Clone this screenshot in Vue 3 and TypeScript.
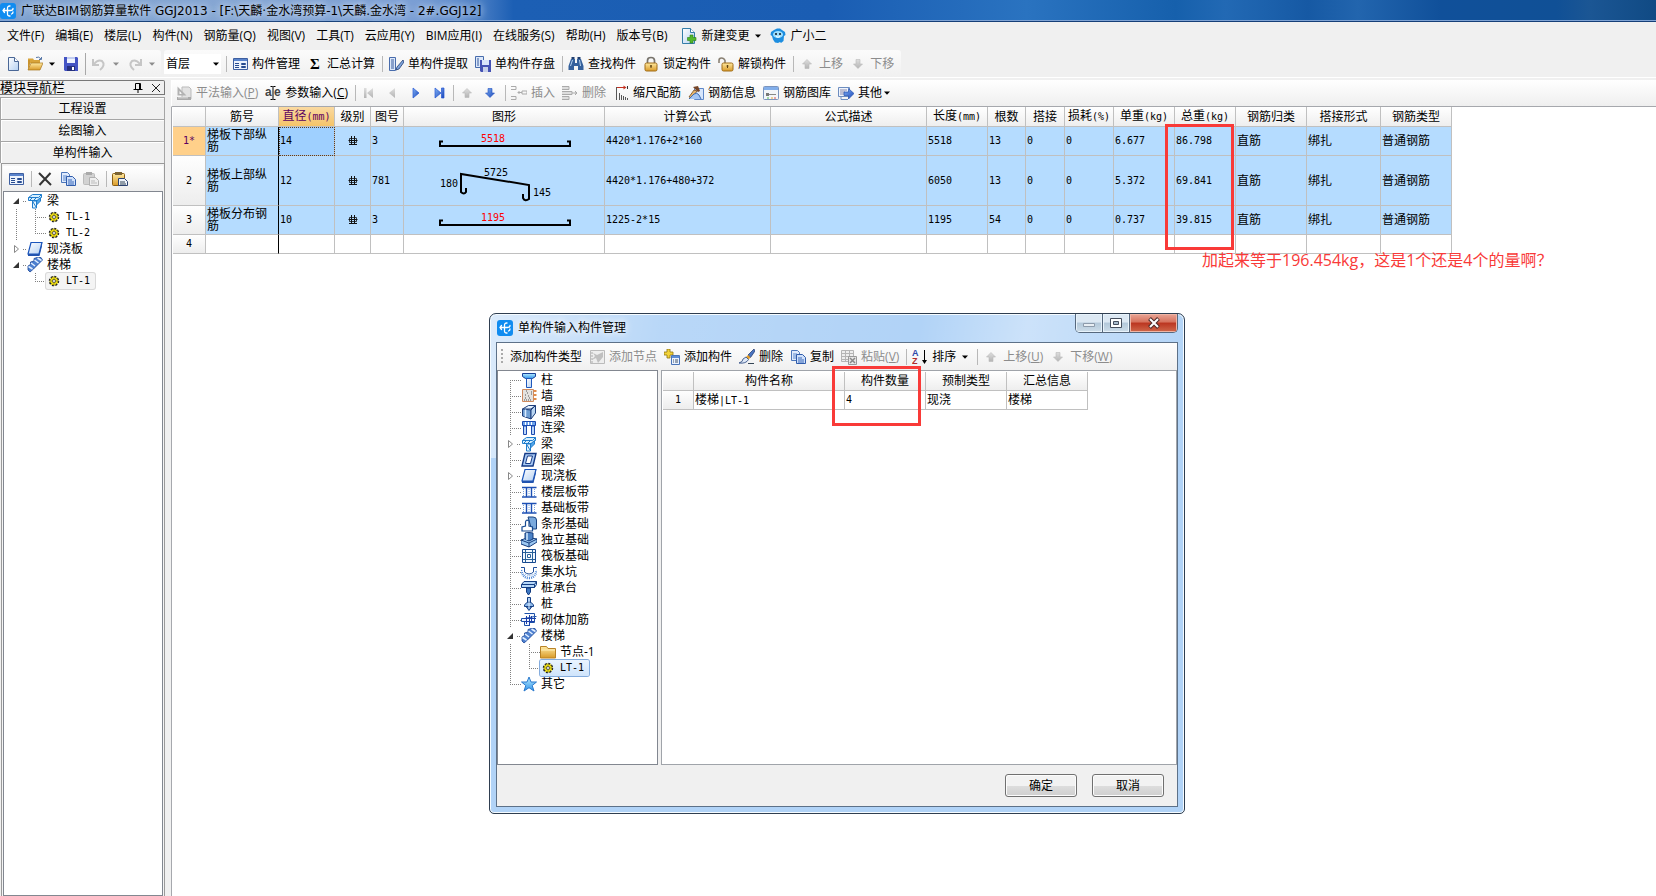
<script setup lang="ts">
interface Tool {
  icon?: string
  label?: string
  hotkey?: string
  name?: string
  disabled?: boolean
  drop?: boolean
  sep?: boolean
}
interface Node {
  label: string
  icon: string
  guides: string[]
  fold?: 'open' | 'closed'
  latin?: boolean
  selected?: boolean
}
interface Bar {
  no: string
  name: string
  dia: string
  shapeNo: string
  formula: string
  length: string
  count: string
  unit: string
  total: string
}

const menus: string[] = ['文件(F)', '编辑(E)', '楼层(L)', '构件(N)', '钢筋量(Q)', '视图(V)', '工具(T)', '云应用(Y)', 'BIM应用(I)', '在线服务(S)', '帮助(H)', '版本号(B)']

const mainTools: Tool[] = [
  { sep: true },
  { icon: 'card', label: '构件管理' },
  { icon: 'sigma', label: '汇总计算' },
  { sep: true },
  { icon: 'extract', label: '单构件提取' },
  { icon: 'store', label: '单构件存盘' },
  { sep: true },
  { icon: 'binoc', label: '查找构件' },
  { icon: 'lock', label: '锁定构件' },
  { icon: 'unlock', label: '解锁构件' },
  { sep: true },
  { icon: 'up', label: '上移', disabled: true },
  { icon: 'down', label: '下移', disabled: true },
]

const gridTools: Tool[] = [
  { icon: 'square', label: '平法输入', hotkey: 'P', disabled: true },
  { icon: 'ae', label: '参数输入', hotkey: 'C' },
  { sep: true },
  { icon: 'first', name: '首行', disabled: true },
  { icon: 'prev', name: '上一行', disabled: true },
  { icon: 'next', name: '下一行' },
  { icon: 'last', name: '末行' },
  { sep: true },
  { icon: 'up', name: '行上移', disabled: true },
  { icon: 'down-blue', name: '行下移' },
  { sep: true },
  { icon: 'insert', label: '插入', disabled: true },
  { icon: 'remove', label: '删除', disabled: true },
  { icon: 'scale', label: '缩尺配筋' },
  { icon: 'info', label: '钢筋信息' },
  { icon: 'library', label: '钢筋图库' },
  { icon: 'more', label: '其他', drop: true },
]

const navTools: Tool[] = [
  { icon: 'card', name: '构件管理' },
  { sep: true },
  { icon: 'cross', name: '删除构件' },
  { icon: 'copy', name: '复制构件' },
  { icon: 'paste-grey', name: '粘贴构件', disabled: true },
  { sep: true },
  { icon: 'paste', name: '粘贴' },
]

const dialogTools: Tool[] = [
  { label: '添加构件类型' },
  { icon: 'add-node', label: '添加节点', disabled: true },
  { icon: 'add-item', label: '添加构件' },
  { icon: 'brush', label: '删除' },
  { icon: 'copy', label: '复制' },
  { icon: 'paste-grid', label: '粘贴', hotkey: 'V', disabled: true },
  { sep: true },
  { icon: 'sort', label: '排序', drop: true },
  { sep: true },
  { icon: 'up', label: '上移', hotkey: 'U', disabled: true },
  { icon: 'down', label: '下移', hotkey: 'W', disabled: true },
]

const navTree: Node[] = [
  { label: '梁', icon: 'beam', guides: ['stub'], fold: 'open' },
  { label: 'TL-1', icon: 'gear', guides: ['bar', 'tee'], latin: true },
  { label: 'TL-2', icon: 'gear', guides: ['bar', 'elbow'], latin: true },
  { label: '现浇板', icon: 'slab', guides: ['stub'], fold: 'closed' },
  { label: '楼梯', icon: 'stair', guides: ['stub'], fold: 'open' },
  { label: 'LT-1', icon: 'gear', guides: ['blank', 'elbow'], latin: true, selected: true },
]

const dialogTree: Node[] = [
  { label: '柱', icon: 'column', guides: ['start'] },
  { label: '墙', icon: 'wall', guides: ['tee'] },
  { label: '暗梁', icon: 'hidden-beam', guides: ['tee'] },
  { label: '连梁', icon: 'link-beam', guides: ['tee'] },
  { label: '梁', icon: 'beam', guides: ['stub'], fold: 'closed' },
  { label: '圈梁', icon: 'ring', guides: ['tee'] },
  { label: '现浇板', icon: 'slab', guides: ['stub'], fold: 'closed' },
  { label: '楼层板带', icon: 'band', guides: ['tee'] },
  { label: '基础板带', icon: 'band', guides: ['tee'] },
  { label: '条形基础', icon: 'strip', guides: ['tee'] },
  { label: '独立基础', icon: 'footing', guides: ['tee'] },
  { label: '筏板基础', icon: 'raft', guides: ['tee'] },
  { label: '集水坑', icon: 'pit', guides: ['tee'] },
  { label: '桩承台', icon: 'cap', guides: ['tee'] },
  { label: '桩', icon: 'pile', guides: ['tee'] },
  { label: '砌体加筋', icon: 'masonry', guides: ['tee'] },
  { label: '楼梯', icon: 'stair', guides: ['stub'], fold: 'open' },
  { label: '节点-1', icon: 'folder', guides: ['bar', 'tee'] },
  { label: 'LT-1', icon: 'gear', guides: ['bar', 'elbow'], latin: true, selected: true },
  { label: '其它', icon: 'star', guides: ['elbow'] },
]

const columns: { title: string; unit?: string; width: number }[] = [
  { title: '', width: 33 },
  { title: '筋号', width: 73 },
  { title: '直径', unit: '(mm)', width: 56 },
  { title: '级别', width: 36 },
  { title: '图号', width: 33 },
  { title: '图形', width: 201 },
  { title: '计算公式', width: 166 },
  { title: '公式描述', width: 156 },
  { title: '长度', unit: '(mm)', width: 61 },
  { title: '根数', width: 38 },
  { title: '搭接', width: 39 },
  { title: '损耗', unit: '(%)', width: 49 },
  { title: '单重', unit: '(kg)', width: 61 },
  { title: '总重', unit: '(kg)', width: 61 },
  { title: '钢筋归类', width: 71 },
  { title: '搭接形式', width: 74 },
  { title: '钢筋类型', width: 71 },
]

const bars: Bar[] = [
  { no: '1*', name: '梯板下部纵筋', dia: '14', shapeNo: '3', formula: '4420*1.176+2*160', length: '5518', count: '13', unit: '6.677', total: '86.798' },
  { no: '2', name: '梯板上部纵筋', dia: '12', shapeNo: '781', formula: '4420*1.176+480+372', length: '6050', count: '13', unit: '5.372', total: '69.841' },
  { no: '3', name: '梯板分布钢筋', dia: '10', shapeNo: '3', formula: '1225-2*15', length: '1195', count: '54', unit: '0.737', total: '39.815' },
]
</script>

<template>
  <svg class="lettered" aria-hidden="true">
    <symbol id="sigma" viewBox="0 0 16 16"><text x="3" y="13" font-family="Liberation Serif" font-weight="bold" font-size="15">Σ</text></symbol>
    <symbol id="ae" viewBox="0 0 16 16"><text x="0" y="11" font-family="Liberation Sans" font-weight="bold" font-size="12" fill="#444">a</text><text x="9" y="11" font-family="Liberation Sans" font-weight="bold" font-size="12" fill="#444">e</text><path d="M5.500 1.500h2l.5.5.5-.5h2M8 2v12m-2.500.5h2L8 14l.5.5h2" fill="none" stroke="#000" /></symbol>
    <symbol id="sort" viewBox="0 0 16 16"><text x="0" y="7" font-family="Liberation Sans" font-weight="bold" font-size="9" fill="#2c48a8">A</text><text x="0" y="15" font-family="Liberation Sans" font-weight="bold" font-size="9" fill="#b02c2c">Z</text><path d="M12.500 1v12" stroke="#000" /><path d="M10 11h5l-2.500 4z" /></symbol>
  </svg>
  <svg class="defs" aria-hidden="true">
    <defs>
      <linearGradient id="blue" x1="0" y1="0" x2="1" y2="1"><stop offset="0" stop-color="#7fb0f5" /><stop offset="1" stop-color="#1c48b8" /></linearGradient>
      <linearGradient id="pale" x1="0" y1="0" x2="1" y2="1"><stop offset="0" stop-color="#fff" /><stop offset="1" stop-color="#b4d0f2" /></linearGradient>
      <linearGradient id="gold" x1="0" y1="0" x2="0" y2="1"><stop offset="0" stop-color="#ffe9a0" /><stop offset="1" stop-color="#d99a28" /></linearGradient>
      <linearGradient id="grey" x1="0" y1="0" x2="0" y2="1"><stop offset="0" stop-color="#dedede" /><stop offset="1" stop-color="#b4b4b4" /></linearGradient>
      <linearGradient id="sky" x1="0" y1="0" x2="0" y2="1"><stop offset="0" stop-color="#b8ecff" /><stop offset="1" stop-color="#3294ea" /></linearGradient>
    </defs>
    <symbol id="logo" viewBox="0 0 16 16"><rect width="16" height="16" rx="3" fill="#108cf0" /><g fill="none" stroke="#fff" stroke-width="1.300" stroke-linecap="round"><path d="M10 3Q7.500 2.800 7.500 5v6q0 2.200 2.500 2M3 7.500h7.500Q13 7.500 13 5.500M4.500 5.500 3 7.500l1.500 2M11.500 11q1.500-.5 1.500-2" /></g></symbol>
    <symbol id="new" viewBox="0 0 16 16"><path d="M3.500 1.500h6l4 4v9h-10z" fill="url(#pale)" stroke="#4a6796" /><path d="M9.500 1.500v4h4" fill="#fff" stroke="#4a6796" /></symbol>
    <symbol id="open" viewBox="0 0 16 16"><path d="M1 4V2.500h5L7 4h6v3H1z" fill="#d8a43a" /><path d="M1 14V4h2v4z" fill="#c9922c" /><path d="M1 14 4 7h12l-3 7z" fill="url(#gold)" stroke="#a8761c" stroke-width=".7" /><path d="M9 1.500q3-1.500 5 1.500m.5-2v2.500H12" fill="none" stroke="#5878a8" /></symbol>
    <symbol id="save" viewBox="0 0 16 16"><path d="M1 1h13l1 1v13H2l-1-1z" fill="#4454c4" /><path d="M4 1h8v6H4z" fill="#eef3ff" /><path d="M4 1h8v2H4z" fill="#c2cdf0" /><path d="M4 10h8v5H4z" fill="#26307e" /><path d="M9 11h2v3H9z" fill="#fff" /></symbol>
    <symbol id="undo" viewBox="0 0 16 16"><path d="M2 3v6h6" fill="none" stroke="#c6c6c6" stroke-width="2" /><path d="M3 8q4-5 8-3 4 4-2 9" fill="none" stroke="#c6c6c6" stroke-width="2" /></symbol>
    <symbol id="redo" viewBox="0 0 16 16"><path d="M14 3v6H8" fill="none" stroke="#c6c6c6" stroke-width="2" /><path d="M13 8Q9 3 5 5q-4 4 2 9" fill="none" stroke="#c6c6c6" stroke-width="2" /></symbol>
    <symbol id="card" viewBox="0 0 16 16"><path d="M1.500 2.500h14v11h-14z" fill="#edf3fc" stroke="#3e5fa0" /><path d="M2 3h13v2H2z" fill="#5a84cc" /><path d="M3 7.500h4M3 9.500h4M3 11.500h4" stroke="#284c90" /><path d="M9.500 7.500h4v1h-4zm0 3h4v1h-4z" fill="#fff" stroke="#284c90" /></symbol>
    <symbol id="extract" viewBox="0 0 16 16"><path d="M1.500 1.500h6v13h-6z" fill="#dce8fa" stroke="#486cac" /><path d="M3 4h3M3 6h3M3 8h3M3 10h3M3 12h3" stroke="#34589c" /><path d="M15 4 9 11l-1 3 3-1 5-7z" fill="#7fa5dc" stroke="#213c72" stroke-width=".8" /></symbol>
    <symbol id="store" viewBox="0 0 16 16"><path d="M.5.5h8v11h-8z" fill="#dce8fa" stroke="#486cac" /><path d="M2 3h2M2 5h2M2 7h2M2 9h2" stroke="#34589c" /><path d="M5 4h11v12H6l-1-1z" fill="#4552b4" /><path d="M7 4h7v5H7z" fill="#d9e4fa" /><path d="M8 11h5v5H8z" fill="#c8d0ea" /></symbol>
    <symbol id="binoc" viewBox="0 0 16 16"><path d="M3 3h4v4h2V3h4l2.500 7v4H10v-4H6v4H.5v-4z" fill="#34609c" /><path d="M3.500 1h3v2h-3zm6 0h3v2h-3z" fill="#203e70" /><path d="M4 4h1L3 10H2zm7 0h1l1 6h-1z" fill="#b6d2f0" /></symbol>
    <symbol id="lock" viewBox="0 0 16 16"><path d="M4.500 8V4.500Q4.500 1.500 8 1.500t3.500 3V8" fill="none" stroke="#77736c" stroke-width="1.700" /><rect x="2" y="7" width="12" height="8" rx="1.500" fill="url(#gold)" stroke="#a06c18" /><path d="M8 9v3M7 10h2" stroke="#5c4010" /></symbol>
    <symbol id="unlock" viewBox="0 0 16 16"><path d="M1 7V4.500Q1 2 3.500 2T7 4.500V8" fill="none" stroke="#8a8174" stroke-width="1.600" /><rect x="4" y="7" width="11" height="8" rx="1.500" fill="url(#gold)" stroke="#a06c18" /><path d="M9.500 9v3m-1-2h2" stroke="#5c4010" /></symbol>
    <symbol id="up" viewBox="0 0 16 16"><path d="m8 3.500 4.500 4.500H10v4.500H6V8H3.500z" fill="url(#grey)" stroke="#bababa" stroke-width=".6" /></symbol>
    <symbol id="down" viewBox="0 0 16 16"><path d="m8 12.500 4.500-4.500H10V3.500H6V8H3.500z" fill="url(#grey)" stroke="#bababa" stroke-width=".6" /></symbol>
    <symbol id="down-blue" viewBox="0 0 16 16"><path d="m8 12.500 4.500-4.500H10V3.500H6V8H3.500z" fill="url(#blue)" stroke="#2450c0" stroke-width=".6" /></symbol>
    <symbol id="square" viewBox="0 0 16 16"><path d="M6 2h7l2 2v10H6z" fill="#e2e2e2" stroke="#bbb" /><path d="M1.500 1.500v9h9zM3.500 6v3h3z" fill="#b2b2b2" fill-rule="evenodd" /><path d="M1 12h14v3H1z" fill="#aaa" /><path d="M3 12v1.500m2-1.500v1.500m2-1.500v1.500m2-1.500v1.500m2-1.500v1.500" stroke="#eee" /></symbol>
    <symbol id="first" viewBox="0 0 16 16"><path d="M3 3h2.500v10H3zm9 0v10L6 8z" fill="url(#grey)" /></symbol>
    <symbol id="prev" viewBox="0 0 16 16"><path d="M11 3v10L5 8z" fill="url(#grey)" /></symbol>
    <symbol id="next" viewBox="0 0 16 16"><path d="M6 3v10l6-5z" fill="url(#blue)" stroke="#2558d4" stroke-width=".7" /></symbol>
    <symbol id="last" viewBox="0 0 16 16"><path d="M11.500 3H14v10h-2.500zM5 3v10l6-5z" fill="url(#blue)" stroke="#2558d4" stroke-width=".7" /></symbol>
    <symbol id="insert" viewBox="0 0 16 16"><path d="M0 1.500h5m0 0v3H0m0 7h5v3H0m7-7h4m0-1.500h5v3h-5zM8.500 6 7 7.500 8.500 9" fill="none" stroke="#aaa" /></symbol>
    <symbol id="remove" viewBox="0 0 16 16"><path d="M0 1.500h7v3H0m0 7h7v3H0M0 6.500h10v3H0M10 8h5m-2-2 2 2-2 2" fill="#ddd" stroke="#aaa" /></symbol>
    <symbol id="scale" viewBox="0 0 16 16"><path d="M3.500 2v13M6.500 8v7m2-5v5m2-4v4m2-3v3m2-2v2" fill="none" stroke="#444" stroke-width=".9" /><path d="M4 2.500h8" stroke="#c43020" /><path d="M10.500.5v4l3-2z" fill="#c43020" /><path d="M14.500 1v3" stroke="#333" /></symbol>
    <symbol id="info" viewBox="0 0 16 16"><path d="M6.500 3.500h9v11h-9z" fill="#d7e6fc" stroke="#5f88c8" /><path d="m1 12 5-7 3 1-5 7z" fill="#e6b56c" stroke="#754b20" stroke-width=".8" /><path d="M1 14 6 9q3-2 5 1l2 4" fill="#a4c6f4" stroke="#3e6cb0" /><path d="m5 2 5-1 2 5-2 1-3-3z" fill="#774628" /></symbol>
    <symbol id="library" viewBox="0 0 16 16"><rect x=".5" y="1.500" width="15" height="13" rx="1" fill="#f3f5f9" stroke="#7b94bd" /><path d="M1 2h14v3H1z" fill="#82aeea" /><path d="M3 9.500h10" stroke="#888" /><path d="M3 8h3v3H3z" fill="#777" /><path d="M4 13h2" stroke="#4ab94a" /><path d="M8 13h2" stroke="#e4aa33" /><path d="M11 13h2" stroke="#d85050" /></symbol>
    <symbol id="more" viewBox="0 0 16 16"><path d="M.5 2.500h11v9H.5z" fill="#eef4fd" stroke="#6d8dbf" /><path d="M2 5h7M2 7h5M2 9h5" stroke="#88a" /><path d="M3 11.500v3h7" fill="none" stroke="#6d8dbf" /><path d="M6 7h4.500V3.500L16 8.500 10.500 14v-3.500H6z" fill="url(#blue)" stroke="#234fac" stroke-width=".7" /></symbol>
    <symbol id="cross" viewBox="0 0 16 16"><path d="m2 2 12 12M13.500 2 2.500 14" stroke="#333" stroke-width="2" /></symbol>
    <symbol id="copy" viewBox="0 0 16 16"><path d="M1.500 1.500h6l2 2v8h-8z" fill="#dfeafc" stroke="#4c76ba" /><path d="M3 5h4M3 7h4M3 9h4" stroke="#5d88cc" /><path d="M6.500 5.500h6l3 3v6h-9z" fill="#cfe0fa" stroke="#305cab" /><path d="M8 9h4m-4 2h6m-6 2h6" stroke="#3a68b8" /></symbol>
    <symbol id="paste-grey" viewBox="0 0 16 16"><rect x=".5" y="2.500" width="11" height="11" rx="1" fill="#d2d2d2" stroke="#bbb" /><path d="M3 1h6v3H3z" fill="#aaa" /><path d="M6.500 6.500h6l3 3v5h-9z" fill="#eee" stroke="#b0b0b0" /><path d="M8 10h4m-4 2h6" stroke="#bbb" /></symbol>
    <symbol id="paste" viewBox="0 0 16 16"><rect x=".5" y="2.500" width="12" height="12" rx="1" fill="url(#gold)" stroke="#8a5e14" /><path d="M3 1h7v3H3z" fill="#7c6434" /><path d="M6.500 7.500h6l3 3v4h-9z" fill="#eef3fb" stroke="#2c4270" /><path d="M8 11h5m-5 2h6" stroke="#345" /></symbol>
    <symbol id="add-node" viewBox="0 0 16 16"><path d="M1.500 1.500h14v13h-14z" fill="#eee" stroke="#bbb" /><path d="m4 4 4 2 6-3v5l-5 6-2-5-4 2 3-4z" fill="#c0c0c0" /><path d="M2 4h2M2 7h2M2 10h2M2 13h2" stroke="#aaa" /></symbol>
    <symbol id="add-item" viewBox="0 0 16 16"><path d="M3 0h3v3h3v3H6v3H3V6H0V3h3z" fill="#f3d33a" stroke="#8d7410" stroke-width=".8" /><path d="M7.500 6.500h8v9h-8z" fill="#eaf2ff" stroke="#4a74b8" /><path d="M8 7h7v2H8z" fill="#5b8cd8" /><path d="M9 11h1m1 0h3m-5 2h1m1 0h3" stroke="#456" /></symbol>
    <symbol id="brush" viewBox="0 0 16 16"><path d="m15 0-6 6 2.500 2.500L16 2z" fill="#4a75c0" stroke="#1c356c" stroke-width=".7" /><path d="m9 6 2.500 2.500-2 2L7 8z" fill="#e5a02c" /><path d="M7 8 9.500 10.500Q7 15 0 14q4-1 4-4z" fill="#dfe9f7" stroke="#24437c" stroke-width=".8" /><path d="M9 14.500h6" stroke="#345" /></symbol>
    <symbol id="paste-grid" viewBox="0 0 16 16"><path d="M.5 1.500h12v11H.5zM.500 4.500h12m-12 3h12m-12 3h12M4.500 2v10m4-10v10" fill="#eee" stroke="#b5b5b5" /><path d="M7.500 7.500h8v8h-8z" fill="#e6e6e6" stroke="#999" /><path d="m9 9 5 5m0-5-5 5" stroke="#888" stroke-width="1.500" /></symbol>
    <symbol id="new-change" viewBox="0 0 16 16"><path d="M1.500.5h8l4 4v11h-12z" fill="url(#pale)" stroke="#347da8" /><path d="M9.500.5v4h4" fill="#fff" stroke="#347da8" /><path d="M9 7h3v2.500h3v3h-3V15H9v-2.500H6.500v-3H9z" fill="#52b82a" stroke="#2c8215" stroke-width=".6" /></symbol>
    <symbol id="mascot" viewBox="0 0 16 16"><path d="M4 2 7 .5h3L12 2l3 2 .5 3-1.500 1-.5 5-2.500 2-1-1-2 1-3-.5-2-3L2 8 .5 7 1 4z" fill="#1d8ee0" /><ellipse cx="8" cy="6.500" rx="5" ry="3.600" fill="#9fe0ff" /><circle cx="6" cy="6" r="1.100" fill="#123" /><circle cx="10" cy="6" r="1.100" fill="#123" /><path d="M6 8.500q2 1.500 4 0" fill="none" stroke="#fff" /></symbol>
    <symbol id="beam" viewBox="0 0 16 16"><path d="m1.500 4.500 4-3h9v3l-3 3h-10z" fill="#d5efff" stroke="#1f7ccc" /><path d="M1.500 4.500h10l3-3" fill="none" stroke="#1f7ccc" /><path d="M5.500 8h4v7h-4z" fill="#e4f5ff" stroke="#1f7ccc" /><path d="m9.500 8 4-3.500V8l-4 4z" fill="#4fa4e8" stroke="#1f7ccc" /><path d="m3 7 2-2m2 2 2-2M6 9l3 5" stroke="#1f7ccc" /></symbol>
    <symbol id="slab" viewBox="0 0 16 16"><path d="M4 1.500h11L12 13H1z" fill="url(#pale)" stroke="#1a55bc" stroke-width="1.200" /><path d="M1 13h11l3-11.500V5l-2.500 10H1z" fill="#2254b0" /></symbol>
    <symbol id="stair" viewBox="0 0 16 16"><path d="m1 9 2.500-1.500V5L7 4V1.500l3-1h4l1.500 2.500-9 9L3 15l-2-2z" fill="#4d80d0" stroke="#1c4698" stroke-width=".8" /><path d="m1.500 9.500 4 2.500M4 6l4 3M7.500 3l4 3M10.500 1l4 2.500" stroke="#e2efff" stroke-width="1.500" /></symbol>
    <symbol id="gear" viewBox="0 0 16 16"><circle cx="8" cy="8" r="4.500" fill="#ffec00" stroke="#222" stroke-width="1.400" stroke-dasharray="2 1.500" /><circle cx="8" cy="8" r="1.500" fill="#fff" stroke="#333" stroke-width=".8" /><path d="M8 3v3m0 4v3M3 8h3m4 0h3M4.500 4.500l2 2m3 3 2 2m0-7-2 2m-3 3-2 2" stroke="#555" stroke-width=".6" /></symbol>
    <symbol id="column" viewBox="0 0 16 16"><path d="M1.500 1.500h13v3l-3 2h-7l-3-2z" fill="url(#sky)" stroke="#173f96" /><path d="M5.500 6.500h5v9h-5z" fill="url(#pale)" stroke="#1e58bc" /></symbol>
    <symbol id="wall" viewBox="0 0 16 16"><path d="M1.500 1.500h11v12h-11z" fill="#e4e2df" stroke="#cf8a5e" /><path d="M3 12h1m1 0h1m1 0h1m1 0h1M4 10h1m2-2h1m2-2h1M6 5h1m-3 2h1m3 3h1m1-6h1M5 3h1" stroke="#555" /><path d="M13 3h2.500M13 7h2.500M13 11h2.500" stroke="#d96a10" stroke-width="1.600" /></symbol>
    <symbol id="hidden-beam" viewBox="0 0 16 16"><path d="m1.500 5 6-3.500h7L10 5z" fill="#e3f0fd" stroke="#1e3f7c" /><path d="m1.500 5 8.500 1v9l-8.500-3z" fill="#6f9fd4" stroke="#1e3f7c" /><path d="m10 6 4.500-4.500V9L10 15z" fill="#bad6f2" stroke="#1e3f7c" /><path d="M4.500 5.500V13" stroke="#dcecff" stroke-width="1.500" /></symbol>
    <symbol id="link-beam" viewBox="0 0 16 16"><path d="M1.500 1.500h13v4h-13z" fill="#6fa4ec" stroke="#1a4ab0" /><path d="M4.500 2v3m3-3v3m3-3v3" stroke="#fff" /><path d="M2.500 6h3v8.500h-3zm8 0h3v8.500h-3z" fill="#b9d5fa" stroke="#1a4ab0" /></symbol>
    <symbol id="ring" viewBox="0 0 16 16"><path d="M4 1.500h11L12 14H1z" fill="#a9caf4" stroke="#153a86" stroke-width="1.400" /><path d="M6.500 4h5L9.500 11.500H4.500z" fill="#fff" stroke="#153a86" /></symbol>
    <symbol id="band" viewBox="0 0 16 16"><path d="M1 3.500h14.500M1 13h14.500" stroke="#1c4fb4" stroke-width="1.600" /><path d="M5.500 4v9m5-9v9" stroke="#1c4fb4" stroke-width="1.400" /><path d="M2.500 5v7M13.500 5v7M8 5v7" stroke="#7ba3dc" stroke-dasharray="1 1" /></symbol>
    <symbol id="strip" viewBox="0 0 16 16"><path d="M7 1h5q3.500 0 3.500 3v9h-5z" fill="#7aa9dc" stroke="#1b4480" /><path d="M1 15v-4l3.500-1V6q.5-3 3.500-1v5l3.500 1v4z" fill="#fff" stroke="#184a90" stroke-width="1.200" /></symbol>
    <symbol id="footing" viewBox="0 0 16 16"><path d="m0 8 6-2h4l6 1v3l-8 5-8-3z" fill="#9cc8f2" stroke="#153c7c" /><path d="m0 8 8 3 8-4M8 11v4" fill="none" stroke="#153c7c" /><path d="m4 1 4-.5 4 .5v6L8 9 4 7z" fill="#4b82c6" stroke="#153c7c" /><path d="M6 1v7" stroke="#d5ebff" stroke-width="1.500" /></symbol>
    <symbol id="raft" viewBox="0 0 16 16"><path d="M1.500 1.500h13v13h-13z" fill="#f2f8ff" stroke="#184a90" /><path d="M4.500 2v12M11.500 2v12M2 4.500h12M2 11.500h12" stroke="#286098" /><path d="M6.500 6.500h3v3h-3z" fill="#fff" stroke="#286098" /></symbol>
    <symbol id="pit" viewBox="0 0 16 16"><path d="M0 3.500h3.500V8q4.500 4 9 0V3.500H16" fill="none" stroke="#1f4f9c" /><path d="M0 6q2 8 8 8t8-8" fill="none" stroke="#4f89d8" stroke-width="2.500" stroke-dasharray="1 1" /><path d="M4 10q4 3 8 0" fill="none" stroke="#6a9edf" stroke-dasharray="1 1" /></symbol>
    <symbol id="cap" viewBox="0 0 16 16"><path d="M.5 4.500 3 1.500h12.500v3l-2 3H.5z" fill="#b4d6f8" stroke="#123c82" /><path d="M.5 4.500h13v3M13.500 4.500l2-3" fill="none" stroke="#123c82" /><path d="M5.500 8h4v4l-2 3-2-3z" fill="#3d77c2" stroke="#123c82" /></symbol>
    <symbol id="pile" viewBox="0 0 16 16"><path d="M6.500 1.500h3v5h-3zM3.500 9q2.500-3 3-3h3q.5 0 3 3v1.500h-9zM5.500 11h5L8 14.500z" fill="#8db9ea" stroke="#153f84" /><path d="M8 2v10" stroke="#e1f0ff" /></symbol>
    <symbol id="masonry" viewBox="0 0 16 16"><path d="M3.500 1.500h10v3h2m-2 0v6h-5v3h-5v-4h-3v-3h3z" fill="#eef5ff" stroke="#1c50a8" /><path d="M3 6.500h12M8.500 3v11M5.500 4v8m5-8v6M3 9.500h10" fill="none" stroke="#1b3fa8" /></symbol>
    <symbol id="folder" viewBox="0 0 16 16"><path d="M.5 14V2.500h6l1.500 2h7.500V14z" fill="url(#gold)" stroke="#b88226" /><path d="M1 6h14" stroke="#fff0b8" /></symbol>
    <symbol id="star" viewBox="0 0 16 16"><path d="m8 1 2 5h5.500l-4.300 3.500L13 15l-5-3.300L3 15l1.800-5.500L.5 6H6z" fill="url(#sky)" stroke="#2a78cc" /></symbol>
    <symbol id="drop" viewBox="0 0 10 16"><path d="M2 6.500h6L5 9.800z" fill="currentColor" /></symbol>
    <symbol id="open-node" viewBox="0 0 16 16"><path d="M5 11h6V5z" fill="#333" /></symbol>
    <symbol id="closed-node" viewBox="0 0 16 16"><path d="M6.500 4.500v7L10.500 8z" fill="#fff" stroke="#888" /></symbol>
    <symbol id="grade" viewBox="0 0 16 16"><path d="M6.500 3v9m3-9v9M4 11.500h8M3.500 7.500h9" fill="none" stroke="#111" /><path d="M4.500 9.500v-4h7v4z" fill="none" stroke="#111" stroke-width=".8" /></symbol>
  </svg>

  <div class="app">
    <header class="title">
      <svg class="icon"><use href="#logo" /></svg>
      <h1>广联达BIM钢筋算量软件 GGJ2013 - [F:\天麟·金水湾预算-1\天麟.金水湾 - 2#.GGJ12]</h1>
    </header>

    <nav class="menu">
      <button v-for="m in menus" :key="m" type="button">{{ m }}</button>
      <button type="button" class="tool"><svg class="icon"><use href="#new-change" /></svg>新建变更<svg class="arrow"><use href="#drop" /></svg></button>
      <button type="button" class="tool mascot"><svg class="icon"><use href="#mascot" /></svg>广小二</button>
    </nav>

    <div class="bands">
      <div class="band file">
        <button type="button" class="tool" aria-label="新建"><svg class="icon"><use href="#new" /></svg></button>
        <button type="button" class="tool" aria-label="打开"><svg class="icon"><use href="#open" /></svg><svg class="arrow"><use href="#drop" /></svg></button>
        <button type="button" class="tool" aria-label="保存"><svg class="icon"><use href="#save" /></svg></button>
        <span class="sep tall"></span>
        <button type="button" class="tool" aria-label="撤销" disabled><svg class="icon"><use href="#undo" /></svg><svg class="arrow"><use href="#drop" /></svg></button>
        <button type="button" class="tool" aria-label="重做" disabled><svg class="icon"><use href="#redo" /></svg><svg class="arrow"><use href="#drop" /></svg></button>
      </div>
      <div class="band main-band">
        <label class="floor">
          <select aria-label="楼层"><option>首层</option></select>
          <svg class="arrow"><use href="#drop" /></svg>
        </label>
        <template v-for="(t, i) in mainTools" :key="i">
          <span v-if="t.sep" class="sep"></span>
          <button v-else type="button" class="tool" :disabled="t.disabled"><svg class="icon"><use :href="'#' + t.icon" /></svg>{{ t.label }}</button>
        </template>
      </div>
    </div>

    <div class="body">
      <aside class="dock">
        <div class="dock-head">
          <h2>模块导航栏</h2>
          <button type="button" aria-label="固定"><svg viewBox="0 0 10 10"><path d="M2.500 6V.5h5V6M6.500 1v5M.5 6.500h9M5 7v3" fill="none" stroke="#000" /></svg></button>
          <button type="button" aria-label="关闭"><svg viewBox="0 0 10 10"><path d="m1 1 8 8m0-8L1 9" stroke="#222" /></svg></button>
        </div>
        <button type="button" class="stage">工程设置</button>
        <button type="button" class="stage">绘图输入</button>
        <button type="button" class="stage">单构件输入</button>
        <div class="dock-body">
          <div class="dock-tools">
            <template v-for="(t, i) in navTools" :key="i">
              <span v-if="t.sep" class="sep"></span>
              <button v-else type="button" class="tool" :aria-label="t.name" :disabled="t.disabled"><svg class="icon"><use :href="'#' + t.icon" /></svg></button>
            </template>
          </div>
          <ul class="tree">
            <li v-for="n in navTree" :key="n.label">
              <span v-for="(g, i) in n.guides" :key="i" class="guide" :class="g"><svg v-if="n.fold" class="icon"><use :href="'#' + n.fold + '-node'" /></svg></span>
              <span class="node" :class="{ plain: n.selected }"><svg class="icon"><use :href="'#' + n.icon" /></svg><span class="name" :class="{ mono: n.latin }">{{ n.label }}</span></span>
            </li>
          </ul>
        </div>
      </aside>

      <main class="work">
        <div class="grid-tools">
          <template v-for="(t, i) in gridTools" :key="i">
            <span v-if="t.sep" class="sep"></span>
            <button v-else type="button" class="tool" :aria-label="t.name" :disabled="t.disabled"><svg class="icon"><use :href="'#' + t.icon" /></svg><span v-if="t.label">{{ t.label }}<template v-if="t.hotkey">(<u>{{ t.hotkey }}</u>)</template></span><svg v-if="t.drop" class="arrow tight"><use href="#drop" /></svg></button>
          </template>
        </div>
        <div class="sheet">
          <table class="grid rebar">
            <colgroup><col v-for="(c, i) in columns" :key="i" :style="{ width: c.width + 'px' }"></colgroup>
            <thead>
              <tr><th v-for="(c, i) in columns" :key="i" :class="{ hot: i === 2 }">{{ c.title }}<span v-if="c.unit" class="mono">{{ c.unit }}</span></th></tr>
            </thead>
            <tbody>
              <tr v-for="(b, i) in bars" :key="b.no" class="filled" :class="{ high: i === 1 }">
                <th class="mono" :class="{ hot: i === 0 }">{{ b.no }}</th>
                <td class="edge wrap">{{ b.name }}</td>
                <td class="mono" :class="{ focus: i === 0 }">{{ b.dia }}</td>
                <td class="mid"><svg class="icon"><use href="#grade" /></svg></td>
                <td class="mono">{{ b.shapeNo }}</td>
                <td class="shape">
                  <svg v-if="i !== 1" width="200" height="28" class="mono">
                    <path d="M39 14.500h-3V19h130v-4.500h-3" fill="none" stroke="#000" stroke-width="2" />
                    <text x="77" y="15" fill="#f00">{{ b.length }}</text>
                  </svg>
                  <svg v-else width="200" height="49" class="mono">
                    <path d="M62 32v4q-2 3-5 0V18l68 11v14q-4 3-6-1v-4" fill="none" stroke="#000" stroke-width="2" />
                    <text x="80" y="20">5725</text><text x="36" y="31">180</text><text x="129" y="40">145</text>
                  </svg>
                </td>
                <td class="mono">{{ b.formula }}</td>
                <td></td>
                <td class="mono">{{ i === 1 ? '6050' : b.length }}</td>
                <td class="mono">{{ b.count }}</td>
                <td class="mono">0</td>
                <td class="mono">0</td>
                <td class="mono">{{ b.unit }}</td>
                <td class="mono">{{ b.total }}</td>
                <td>直筋</td>
                <td>绑扎</td>
                <td>普通钢筋</td>
              </tr>
              <tr class="last">
                <th class="mono">4</th>
                <td v-for="n in 16" :key="n" :class="{ edge: n === 1 }"></td>
              </tr>
            </tbody>
          </table>
          <div class="mark totals"></div>
          <p class="note">加起来等于196.454kg，这是1个还是4个的量啊？</p>
        </div>
      </main>
    </div>

    <section class="dialog" role="dialog" aria-labelledby="dialog-title">
      <header class="dialog-title">
        <svg class="icon"><use href="#logo" /></svg>
        <h2 id="dialog-title">单构件输入构件管理</h2>
        <div class="window-buttons">
          <button type="button" aria-label="最小化"><svg viewBox="0 0 16 12"><path d="M2.500 6.500h11v3h-11z" fill="#e8eef4" stroke="#8d9bab" /></svg></button>
          <button type="button" aria-label="最大化"><svg viewBox="0 0 16 12"><path d="M2.500 1.500h11v9h-11z" fill="#fff" stroke="#444d5c" /><path d="M5.500 4.500h5v3h-5z" fill="#a9bccd" stroke="#444d5c" /></svg></button>
          <button type="button" class="close" aria-label="关闭"><svg viewBox="0 0 16 12"><path d="m3.500 1.500 9 9m0-9-9 9" stroke="#4c2a28" stroke-width="4" /><path d="m4 2 8 8m0-8-8 8" stroke="#fff" stroke-width="2" /></svg></button>
        </div>
      </header>
      <div class="client">
        <div class="dialog-tools">
          <span class="grip"></span>
          <template v-for="(t, i) in dialogTools" :key="i">
            <span v-if="t.sep" class="sep"></span>
            <button v-else type="button" class="tool" :disabled="t.disabled"><svg v-if="t.icon" class="icon"><use :href="'#' + t.icon" /></svg><span>{{ t.label }}<template v-if="t.hotkey">(<u>{{ t.hotkey }}</u>)</template></span><svg v-if="t.drop" class="arrow"><use href="#drop" /></svg></button>
          </template>
        </div>
        <div class="panes">
          <ul class="tree types">
            <li v-for="n in dialogTree" :key="n.label">
              <span v-for="(g, i) in n.guides" :key="i" class="guide" :class="g"><svg v-if="n.fold" class="icon"><use :href="'#' + n.fold + '-node'" /></svg></span>
              <span class="node" :class="{ picked: n.selected }"><svg class="icon"><use :href="'#' + n.icon" /></svg><span class="name" :class="{ mono: n.latin }">{{ n.label }}</span></span>
            </li>
          </ul>
          <div class="list">
            <table class="grid items">
              <colgroup><col class="c-no"><col class="c-name"><col class="c-part"><col class="c-part"><col class="c-part"></colgroup>
              <thead><tr><th></th><th>构件名称</th><th>构件数量</th><th>预制类型</th><th>汇总信息</th></tr></thead>
              <tbody><tr><th class="mono">1</th><td>楼梯<span class="mono">|LT-1</span></td><td class="mono">4</td><td>现浇</td><td>楼梯</td></tr></tbody>
            </table>
            <div class="mark quantity"></div>
          </div>
        </div>
        <footer class="actions">
          <button type="button">确定</button>
          <button type="button">取消</button>
        </footer>
      </div>
    </section>
  </div>
</template>

<style>
body { margin: 0; background: #fff; }
</style>

<style scoped>
.lettered { display: none; }
.defs { position: absolute; width: 0; height: 0; }
.app, .app * { box-sizing: border-box; }
.app { position: relative; display: flex; flex-direction: column; min-height: 100vh; overflow: hidden; background: #f0f0f0; color: #000; font: 12px/16px "Open Sans", "Noto Sans CJK SC", sans-serif; white-space: nowrap; }
button { margin: 0; padding: 0; border: 0; background: none; font: inherit; color: inherit; white-space: nowrap; }
h1, h2, p, ul { margin: 0; padding: 0; font: inherit; list-style: none; }
.icon { display: block; flex: none; width: 16px; height: 16px; }
.mono { font-family: "DejaVu Sans Mono", "Noto Sans CJK SC", monospace; font-size: 10px; }

.title { display: flex; align-items: center; gap: 5px; height: 22px; border-bottom: 1px solid #163f78; box-shadow: inset 0 -1px #7fa3d4; background: linear-gradient(90deg, #7b9fce 0, #86a6d3 14%, #7a9ed4 25%, #5c8acb 28%, #1c5fb4 31%, #1a5db3 50%, #2a73c0 62%, #1660ac 71%, #2269b4 74%, #1659a4 79%, #2265ae 82%, #10509a 87%, #105096 94%, #1b5694 96%, #104a84 100%); }
.title h1 { font-family: "DejaVu Sans", "Noto Sans CJK SC", sans-serif; text-shadow: 0 0 6px #dbe7f6, 0 0 8px #c8d9ef; }

.menu { display: flex; align-items: center; gap: 11px; height: 28px; padding-left: 7px; }
.tool { display: flex; flex: none; align-items: center; gap: 4px; height: 20px; margin-right: 7px; }
.menu .tool { margin: 0 0 0 3px; }
.menu .mascot { margin-left: -4px; }
.tool:disabled { color: #8c8c8c; }
.arrow { display: block; flex: none; width: 10px; height: 16px; }
.arrow.tight { margin-left: -4px; }
.sep { flex: none; width: 1px; height: 16px; margin-right: 5px; background: #b8b8b8; }

.bands { display: flex; height: 28px; border-bottom: 1px solid #fff; }
.band { display: flex; align-items: center; height: 27px; background: linear-gradient(#fbfbfb, #f0f0f0); border-radius: 3px; }
.file { width: 161px; padding-left: 5px; }
.file .tool { margin-right: 6px; }
.file .tall { height: 22px; background: #a8a8a8; }
.main-band { margin-left: 3px; }
.floor { display: flex; align-items: center; width: 57px; height: 20px; margin-right: 5px; background: #fff; }
.floor select { flex: 1; min-width: 0; height: 20px; padding: 0 0 0 2px; border: 0; background: none; appearance: none; font: inherit; color: #000; }

.body { display: flex; flex: 1; padding-top: 2px; }
.dock { display: flex; flex: none; flex-direction: column; width: 165px; }
.dock-head { display: flex; flex: none; align-items: center; height: 15px; margin-bottom: 2px; padding-right: 3px; border: 1px solid #777; border-left: 0; border-radius: 0 2px 0 0; }
.dock-head h2 { flex: 1; font-size: 13px; line-height: 13px; }
.dock-head button { width: 10px; height: 12px; margin-left: 8px; }
.dock-head svg { display: block; width: 10px; height: 10px; }
.stage { flex: none; height: 22px; border: 1px solid #a5a5a5; border-width: 1px 1px 0; box-shadow: inset 1px 1px #fff; background: #f0f0f0; text-align: center; }
.dock-body { display: flex; flex: 1; flex-direction: column; margin-left: 1px; padding: 2px 1px 0; border: 1px solid #9a9a9a; border-bottom: 0; background: #f4f4f4; }
.dock-tools { display: flex; align-items: center; height: 25px; padding-left: 5px; background: linear-gradient(#fff, #ededed); }
.tree { flex: 1; padding: 1px 0 0 4px; border: 1px solid #828790; background: #fff; }
.tree li { display: flex; align-items: center; height: 16px; }
.guide { flex: none; width: 19px; height: 16px; background-repeat: no-repeat; --v: repeating-linear-gradient(to bottom, #808080 0 1px, transparent 1px 2px); --h: repeating-linear-gradient(to right, #808080 0 1px, transparent 1px 2px); }
.tee { background-image: var(--v), var(--h); background-position: 8px 0, 8px 8px; background-size: 1px 16px, 11px 1px; }
.elbow { background-image: var(--v), var(--h); background-position: 8px 0, 8px 8px; background-size: 1px 8px, 11px 1px; }
.start { background-image: var(--v), var(--h); background-position: 8px 8px, 8px 8px; background-size: 1px 8px, 11px 1px; }
.bar { background-image: var(--v); background-position: 8px 0; background-size: 1px 16px; }
.stub { background-image: var(--h); background-position: 15px 8px; background-size: 4px 1px; }
.node { display: flex; align-items: center; gap: 4px; height: 16px; border-radius: 2px; }
.name { padding-right: 5px; }
.plain { box-shadow: 0 0 0 1px #d9d9d9; background: #f4f4f4; }
.picked { box-shadow: 0 0 0 1px #84acdd; background: linear-gradient(#eaf4ff, #cfe4fb); }

.work { display: flex; flex: 1; flex-direction: column; min-width: 0; margin-left: 6px; }
.grid-tools { display: flex; flex: none; align-items: center; height: 27px; padding-left: 4px; border-bottom: 1px solid #a6a8ad; border-left: 1px solid #fff; background: linear-gradient(#fff, #efefef); }
.sheet { position: relative; flex: 1; padding-left: 1px; border-left: 1px solid #a6a8ad; background: #fff; }
.grid { border-collapse: separate; border-spacing: 0; table-layout: fixed; line-height: 12px; }
.grid th, .grid td { overflow: hidden; padding: 0 0 0 1px; border: 0 solid #c0c0c0; border-width: 0 1px 1px 0; font-weight: normal; text-align: left; vertical-align: middle; }
.grid th { padding: 0; background: linear-gradient(#fff, #eee); text-align: center; }
.grid th.hot { background: linear-gradient(#fad9a0, #f5c469); color: #5c0060; }
.grid tbody th { background: linear-gradient(#fefefe, #ededed); }
.grid tbody th.hot { background: #ffd08a; }
.rebar { width: 1279px; }
.rebar thead tr { height: 20px; }
.filled { height: 29px; }
.filled.high { height: 50px; }
.last { height: 19px; }
.filled td { background: #b5dcff; }
.grid td.wrap { padding-right: 8px; white-space: normal; }
.grid td.edge { border-right-color: #000; }
.grid td.focus { background: #9fd0ff; outline: 1px dotted #5a3c20; outline-offset: -1px; }
.grid td.mid { padding: 0; }
.mid .icon { margin: 0 auto; }
.grid td.shape { padding: 0; }
.shape svg { display: block; }
.mark { position: absolute; border: 3px solid #f93a38; }
.totals { left: 993px; top: 17px; width: 69px; height: 126px; }
.note { position: absolute; left: 1030px; top: 141px; color: #f93a38; font-size: 16px; line-height: 24px; }

.dialog { position: absolute; left: 489px; top: 313px; display: flex; flex-direction: column; width: 696px; height: 501px; padding: 0 6px 6px; border: 1px solid #2f3e50; border-radius: 7px 7px 5px 5px; box-shadow: inset 0 0 0 1px #f5fbff; background: linear-gradient(100deg, rgba(255, 255, 255, .55) 0, rgba(255, 255, 255, .1) 24%, rgba(255, 255, 255, 0) 60%, rgba(255, 255, 255, .35) 75%, rgba(255, 255, 255, 0) 100%) 0 0 / 100% 144px no-repeat, #b1d3f7; }
.dialog-title { display: flex; flex: none; align-items: center; gap: 5px; height: 28px; padding-left: 1px; }
.dialog-title h2 { flex: 1; text-shadow: 0 0 6px #fff, 0 0 8px #fff; }
.window-buttons { display: flex; align-self: flex-start; overflow: hidden; border: 1px solid #56687d; border-top: 0; border-radius: 0 0 5px 5px; }
.window-buttons button { display: flex; align-items: center; justify-content: center; width: 27px; height: 18px; border-right: 1px solid #56687d; box-shadow: inset 0 0 0 1px #e8f3fb; background: linear-gradient(#dce8f3 45%, #b3c8da 50%, #cddde9); }
.window-buttons svg { width: 16px; height: 12px; }
.window-buttons .close { width: 47px; border-right: 0; box-shadow: inset 0 0 0 1px #efb5a5; background: linear-gradient(#e9a596 0, #d6715c 45%, #bb3520 50%, #cf684b); }
.client { display: flex; flex: 1; flex-direction: column; border: 1px solid #5d7188; background: #f0f0f0; }
.dialog-tools { display: flex; flex: none; align-items: center; height: 27px; padding-left: 4px; background: linear-gradient(#fdfdfd, #f0f0f0); }
.grip { width: 2px; height: 15px; margin-right: 7px; background: repeating-linear-gradient(#aaa 0 2px, transparent 2px 4px); }
.panes { display: flex; flex: 1; gap: 3px; }
.types { flex: none; width: 161px; }
.list { position: relative; flex: 1; padding: 1px; border: 1px solid #a0a4aa; background: #fff; }
.items { width: 425px; }
.items tr { height: 19px; }
.c-no { width: 31px; }
.c-name { width: 151px; }
.c-part { width: 81px; }
.quantity { left: 170px; top: -5px; width: 89px; height: 60px; }
.actions { display: flex; flex: none; align-items: center; justify-content: flex-end; gap: 15px; height: 41px; padding-right: 13px; }
.actions button { width: 72px; height: 23px; border: 1px solid #707070; border-radius: 3px; box-shadow: inset 0 0 0 1px #fcfcfc; background: linear-gradient(#f2f2f2 50%, #ddd 52%, #cfcfcf); }
</style>
